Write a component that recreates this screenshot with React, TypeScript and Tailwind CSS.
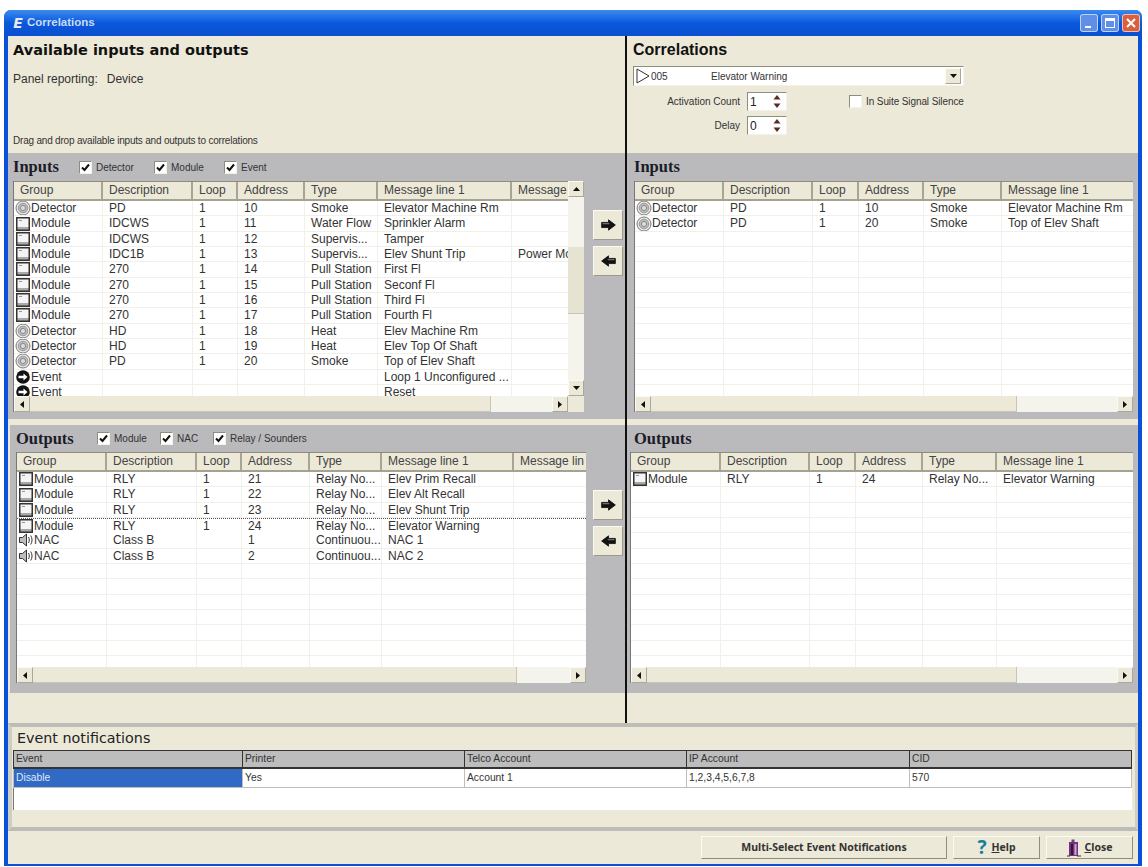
import React from 'react';

type Kind = 'detector' | 'module' | 'event' | 'nac';
type Row = { kind: Kind; group: string; cells: string[]; dotted?: boolean };

const ui = "font-['Liberation_Sans',Arial,sans-serif]";

const KindIcon: React.FC<{ kind: Kind }> = ({ kind }) => {
  if (kind === 'detector') {
    return (
      <svg width="16" height="16" viewBox="0 0 16 16" className="shrink-0">
        <circle cx="8" cy="8" r="7" fill="#ececec" stroke="#777" />
        <circle cx="8" cy="8" r="4.800" fill="#bdbdbd" stroke="#999" />
        <circle cx="8" cy="8" r="2.600" fill="#dcdcdc" stroke="#888" />
      </svg>
    );
  }
  if (kind === 'module') {
    return (
      <svg width="16" height="16" viewBox="0 0 16 16" className="shrink-0">
        <rect x="1" y="1" width="14" height="14" fill="#333" />
        <rect x="2.500" y="2.500" width="11" height="8.500" fill="#f4f4f4" />
        <rect x="2.500" y="11" width="11" height="2.500" fill="#a8a8a8" />
        <path d="M4 4.500h3" stroke="#999" />
      </svg>
    );
  }
  if (kind === 'event') {
    return (
      <svg width="16" height="16" viewBox="0 0 16 16" className="shrink-0">
        <circle cx="8" cy="8" r="6.800" fill="#111" />
        <path d="M3.500 6.800h5V4.600l4 3.400-4 3.400V9.200h-5z" fill="#fff" />
      </svg>
    );
  }
  return (
    <svg width="16" height="16" viewBox="0 0 16 16" className="shrink-0">
      <path d="M1.500 5.500h3l4-3.500v12l-4-3.500h-3z" fill="#bdbdbd" stroke="#333" />
      <path d="M10.500 5c1 1.800 1 4.200 0 6M12.700 3.500c1.800 2.800 1.800 6.200 0 9" fill="none" stroke="#333" />
    </svg>
  );
};

const Check: React.FC<{ on?: boolean }> = ({ on = true }) => (
  <span className="w-[13px] h-[13px] shrink-0 flex items-center justify-center bg-white border border-t-[#8e8e80] border-l-[#8e8e80] border-r-[#f4f3ea] border-b-[#f4f3ea]">
    {on && (
      <svg width="9" height="9" viewBox="0 0 9 9">
        <path d="M1 4.500l2.500 2.500L8 1.500" fill="none" stroke="#111" strokeWidth="2" />
      </svg>
    )}
  </span>
);

const CheckItem: React.FC<{ label: string; width: string }> = ({ label, width }) => (
  <label className={`flex items-center gap-[4px] ${width}`}>
    <Check />
    <span className="text-[10px] text-[#333]">{label}</span>
  </label>
);

const ScrollBtn: React.FC<{ dir: 'up' | 'down' | 'left' | 'right' }> = ({ dir }) => {
  const d = {
    up: 'M1 6l3.500-4 3.500 4z',
    down: 'M1 2l3.500 4 3.500-4z',
    left: 'M6 1l-4 3.500 4 3.500z',
    right: 'M2 1l4 3.500-4 3.500z',
  }[dir];
  return (
    <span className="w-[16px] h-[16px] shrink-0 flex items-center justify-center bg-[#ece9d8] border border-t-[#fbfaf3] border-l-[#fbfaf3] border-r-[#aca899] border-b-[#aca899]">
      <svg width="9" height="9" viewBox="0 0 9 9">
        <path d={d} fill="#111" />
      </svg>
    </span>
  );
};

const HScroll: React.FC<{ thumb: string }> = ({ thumb }) => (
  <div className="h-[16px] shrink-0 flex bg-[#f5f4ec]">
    <ScrollBtn dir="left" />
    <div className={`${thumb} h-[16px] bg-[#ece9d8] border-b border-r border-[#c9c6b4]`} />
    <div className="flex-1" />
    <ScrollBtn dir="right" />
  </div>
);

const Grid: React.FC<{
  widths: number[];
  headers: string[];
  rows: Row[];
  thumb: string;
  rowCount: number;
}> = ({ widths, headers, rows, thumb, rowCount }) => (
  <div className="flex-1 min-w-0 flex flex-col h-[231px]">
    <div className="h-[20px] shrink-0 flex bg-[#ece9d8] border-t border-[#8f8c7c] border-b-2 border-b-[#a5a292]">
      {headers.map((h, i) => (
        <div
          key={h}
          style={{ width: widths[i] }}
          className="shrink-0 pl-[6px] text-[12px] leading-[17px] text-[#444] whitespace-nowrap overflow-hidden border-r-2 border-r-[#a8a595] last:border-r-0"
        >
          {h}
        </div>
      ))}
    </div>
    <div className="flex-1 min-h-0 overflow-hidden bg-white">
      {Array.from({ length: rowCount }).map((_, r) => {
        const row = rows[r];
        return (
          <div
            key={r}
            className={`h-[15.33px] flex ${row?.dotted ? 'border-t border-dotted border-t-[#555]' : 'border-b border-[#f1f1e9]'}`}
          >
            {widths.map((w, c) => (
              <div
                key={c}
                style={{ width: w }}
                className="shrink-0 pl-[6px] first:pl-[1px] flex items-center text-[12px] leading-[14px] text-[#333] whitespace-nowrap overflow-hidden border-r border-[#f1f1e9] last:border-r-0"
              >
                {row && c === 0 && <KindIcon kind={row.kind} />}
                {row && (c === 0 ? row.group : row.cells[c - 1])}
              </div>
            ))}
          </div>
        );
      })}
    </div>
    <HScroll thumb={thumb} />
  </div>
);

const TransferBtn: React.FC<{ dir: 'right' | 'left' }> = ({ dir }) => (
  <button className="w-[30px] h-[30px] flex items-center justify-center bg-[#ece9d8] border border-t-[#fbfaf3] border-l-[#fbfaf3] border-r-[#9d9a8a] border-b-[#9d9a8a]">
    <svg width="17" height="12" viewBox="0 0 18 14">
      <path
        d={dir === 'right' ? 'M1 4h8V1l8 6-8 6v-3H1z' : 'M17 4H9V1L1 7l8 6v-3h8z'}
        fill="#111"
        stroke="#111"
      />
      <path d={dir === 'right' ? 'M2 5.500h8' : 'M16 5.500H8'} stroke="#999" strokeWidth="1" />
    </svg>
  </button>
);

const Spin: React.FC<{ value: string }> = ({ value }) => (
  <div className="w-[40px] h-[19px] flex items-center bg-white border border-t-[#8e8e80] border-l-[#8e8e80] border-r-[#f4f3ea] border-b-[#f4f3ea]">
    <span className="flex-1 pl-[2px] text-[12px] text-[#222]">{value}</span>
    <svg width="10" height="15" viewBox="0 0 10 15" className="mr-[4px]">
      <path d="M5 1l3.500 4.500h-7z" fill="#5b2a20" />
      <path d="M5 14L8.500 9.500h-7z" fill="#5b2a20" />
    </svg>
  </div>
);

const inputsRows: Row[] = [
  { kind: 'detector', group: 'Detector', cells: ['PD', '1', '10', 'Smoke', 'Elevator Machine Rm', ''] },
  { kind: 'module', group: 'Module', cells: ['IDCWS', '1', '11', 'Water Flow', 'Sprinkler Alarm', ''] },
  { kind: 'module', group: 'Module', cells: ['IDCWS', '1', '12', 'Supervis...', 'Tamper', ''] },
  { kind: 'module', group: 'Module', cells: ['IDC1B', '1', '13', 'Supervis...', 'Elev Shunt Trip', 'Power Mc'] },
  { kind: 'module', group: 'Module', cells: ['270', '1', '14', 'Pull Station', 'First Fl', ''] },
  { kind: 'module', group: 'Module', cells: ['270', '1', '15', 'Pull Station', 'Seconf Fl', ''] },
  { kind: 'module', group: 'Module', cells: ['270', '1', '16', 'Pull Station', 'Third Fl', ''] },
  { kind: 'module', group: 'Module', cells: ['270', '1', '17', 'Pull Station', 'Fourth Fl', ''] },
  { kind: 'detector', group: 'Detector', cells: ['HD', '1', '18', 'Heat', 'Elev Machine Rm', ''] },
  { kind: 'detector', group: 'Detector', cells: ['HD', '1', '19', 'Heat', 'Elev Top Of Shaft', ''] },
  { kind: 'detector', group: 'Detector', cells: ['PD', '1', '20', 'Smoke', 'Top of Elev Shaft', ''] },
  { kind: 'event', group: 'Event', cells: ['', '', '', '', 'Loop 1 Unconfigured ...', ''] },
  { kind: 'event', group: 'Event', cells: ['', '', '', '', 'Reset', ''] },
];

const outputsRows: Row[] = [
  { kind: 'module', group: 'Module', cells: ['RLY', '1', '21', 'Relay No...', 'Elev Prim Recall', ''] },
  { kind: 'module', group: 'Module', cells: ['RLY', '1', '22', 'Relay No...', 'Elev Alt Recall', ''] },
  { kind: 'module', group: 'Module', cells: ['RLY', '1', '23', 'Relay No...', 'Elev Shunt Trip', ''] },
  { kind: 'module', group: 'Module', cells: ['RLY', '1', '24', 'Relay No...', 'Elevator Warning', ''], dotted: true },
  { kind: 'nac', group: 'NAC', cells: ['Class B', '', '1', 'Continuou...', 'NAC 1', ''] },
  { kind: 'nac', group: 'NAC', cells: ['Class B', '', '2', 'Continuou...', 'NAC 2', ''] },
];

const baseHeaders = ['Group', 'Description', 'Loop', 'Address', 'Type', 'Message line 1'];
const eventCols = [
  { label: 'Event', value: 'Disable', width: 'w-[229px]' },
  { label: 'Printer', value: 'Yes', width: 'w-[222px]' },
  { label: 'Telco Account', value: 'Account 1', width: 'w-[222px]' },
  { label: 'IP Account', value: '1,2,3,4,5,6,7,8', width: 'w-[223px]' },
  { label: 'CID', value: '570', width: 'flex-1' },
];

const sectionTitle = "font-['Liberation_Serif',serif] font-bold text-[16.5px] leading-[20px] text-[#1c1c28]";
const gray = 'bg-[#bababc]';

export default function App() {
  return (
    <div className={`w-[1148px] h-[867px] bg-white pt-[10px] pl-[4px] overflow-hidden ${ui}`}>
      <div className="w-[1138px] h-[856px] flex flex-col rounded-t-[7px] overflow-hidden bg-[#0a50d8]">
        {/* title bar */}
        <div className="h-[26px] shrink-0 flex items-center pl-[7px] pr-[2px] bg-linear-to-b from-[#3a8af0] via-[#0a58dc] to-[#0a4fd0]">
          <span className="w-[14px] text-center font-['DejaVu_Sans',sans-serif] text-[14px] leading-none font-bold italic text-[#e6e9ee]">
            E
          </span>
          <span className="ml-[2px] text-[11.500px] font-bold text-[#c8dcf6]">Correlations</span>
          <div className="ml-auto flex gap-[3px]">
            <span className="w-[18px] h-[18px] rounded-[3px] border border-white/60 bg-[#5f8fe6] flex items-end pl-[4px] pb-[3px]">
              <span className="w-[6px] h-[2px] bg-white" />
            </span>
            <span className="w-[18px] h-[18px] rounded-[3px] border border-white/60 bg-[#5f8fe6] flex items-center justify-center">
              <span className="w-[10px] h-[10px] border border-t-[3px] border-white" />
            </span>
            <span className="w-[18px] h-[18px] rounded-[3px] border border-white/60 bg-[#d8603e] flex items-center justify-center">
              <svg width="12" height="12" viewBox="0 0 12 12">
                <path d="M2 2l8 8M10 2l-8 8" stroke="#fff" strokeWidth="2" />
              </svg>
            </span>
          </div>
        </div>

        <div className="flex-1 min-h-0 mx-[4px] mb-[2px] flex flex-col bg-[#ece9d8]">
          <div className="h-[687px] shrink-0 flex">
            {/* left pane */}
            <div className="w-[617px] shrink-0 flex flex-col">
              <div className="h-[117px] shrink-0 flex flex-col pl-[5px] pt-[4px]">
                <h1 className="font-['DejaVu_Sans',sans-serif] font-bold text-[14.500px] leading-[20px] text-[#111]">
                  Available inputs and outputs
                </h1>
                <p className="mt-[11px] text-[12px] leading-[16px] text-[#333]">
                  Panel reporting:<span className="ml-[9px]">Device</span>
                </p>
                <p className="mt-auto mb-[5px] text-[10px] tracking-[-0.2px] leading-[14px] text-[#333]">
                  Drag and drop available inputs and outputs to correlations
                </p>
              </div>

              <div className={`h-[266px] shrink-0 ${gray} pl-[5px] flex flex-col`}>
                <div className="h-[28px] shrink-0 flex items-center">
                  <h2 className={`${sectionTitle} w-[66px]`}>Inputs</h2>
                  <CheckItem label="Detector" width="w-[75px]" />
                  <CheckItem label="Module" width="w-[70px]" />
                  <CheckItem label="Event" width="w-[60px]" />
                </div>
                <div className="flex">
                  <div className="w-[571px] h-[231px] flex border-l border-[#777]">
                    <Grid
                      widths={[89, 90, 45, 67, 73, 134, 56]}
                      headers={[...baseHeaders, 'Message']}
                      rows={inputsRows}
                      thumb="w-[461px]"
                      rowCount={13}
                    />
                    <div className="w-[16px] h-[231px] shrink-0 flex flex-col bg-[#f5f4ec]">
                      <ScrollBtn dir="up" />
                      <div className="h-[50px] shrink-0" />
                      <div className="h-[67px] shrink-0 bg-[#e6e3d2] border-b border-[#c9c6b4]" />
                      <div className="flex-1" />
                      <ScrollBtn dir="down" />
                      <div className="h-[16px] shrink-0 bg-[#ece9d8]" />
                    </div>
                  </div>
                  <div className="ml-[9px] pt-[29px] flex flex-col gap-[6px]">
                    <TransferBtn dir="right" />
                    <TransferBtn dir="left" />
                  </div>
                </div>
              </div>

              <div className="h-[6px] shrink-0" />

              <div className={`h-[268px] shrink-0 ml-[2px] ${gray} pl-[6px] flex flex-col`}>
                <div className="h-[27px] shrink-0 flex items-center">
                  <h2 className={`${sectionTitle} w-[81px]`}>Outputs</h2>
                  <CheckItem label="Module" width="w-[63px]" />
                  <CheckItem label="NAC" width="w-[53px]" />
                  <CheckItem label="Relay / Sounders" width="w-[100px]" />
                </div>
                <div className="flex">
                  <div className="w-[570px] h-[231px] flex border-l border-[#777]">
                    <Grid
                      widths={[90, 90, 45, 68, 72, 132, 72]}
                      headers={[...baseHeaders, 'Message lin']}
                      rows={outputsRows}
                      thumb="w-[484px]"
                      rowCount={13}
                    />
                  </div>
                  <div className="ml-[7px] pt-[38px] flex flex-col gap-[6px]">
                    <TransferBtn dir="right" />
                    <TransferBtn dir="left" />
                  </div>
                </div>
              </div>
            </div>

            <div className="w-[2px] shrink-0 bg-[#111]" />

            {/* right pane */}
            <div className="flex-1 min-w-0 flex flex-col">
              <div className="h-[117px] shrink-0 pl-[6px] pt-[4px] flex flex-col">
                <h1 className="font-bold text-[16px] leading-[20px] text-[#111]">Correlations</h1>
                <div className="mt-[6px] w-[331px] h-[20px] flex items-center bg-white border border-t-[#8e8e80] border-l-[#8e8e80] border-r-[#f4f3ea] border-b-[#f4f3ea]">
                  <svg width="15" height="16" viewBox="0 0 15 16" className="shrink-0 ml-[2px]">
                    <path d="M1 1l12 7-12 7z" fill="#fff" stroke="#333" />
                  </svg>
                  <span className="text-[10px] text-[#333] w-[60px] shrink-0">005</span>
                  <span className="text-[10px] text-[#333] flex-1">Elevator Warning</span>
                  <span className="mr-[2px]">
                    <ScrollBtn dir="down" />
                  </span>
                </div>
                <div className="mt-[6px] flex items-center">
                  <span className="w-[107px] text-right text-[10px] text-[#333]">Activation Count</span>
                  <span className="ml-[7px]">
                    <Spin value="1" />
                  </span>
                  <span className="ml-[62px]">
                    <Check on={false} />
                  </span>
                  <span className="ml-[4px] text-[10px] tracking-[-0.1px] text-[#333]">In Suite Signal Silence</span>
                </div>
                <div className="mt-[5px] flex items-center">
                  <span className="w-[107px] text-right text-[10px] text-[#333]">Delay</span>
                  <span className="ml-[7px]">
                    <Spin value="0" />
                  </span>
                </div>
              </div>

              <div className={`h-[266px] shrink-0 ${gray} pl-[7px] pr-[5px] flex flex-col`}>
                <div className="h-[28px] shrink-0 flex items-center">
                  <h2 className={sectionTitle}>Inputs</h2>
                </div>
                <div className="h-[231px] flex border-l border-[#777]">
                  <Grid
                    widths={[89, 89, 46, 65, 78, 132]}
                    headers={baseHeaders}
                    rows={inputsRows.filter((r) => r.cells[2] === '10' || r.cells[2] === '20')}
                    thumb="w-[366px]"
                    rowCount={13}
                  />
                </div>
              </div>

              <div className="h-[6px] shrink-0" />

              <div className={`h-[268px] shrink-0 ${gray} pl-[3px] pr-[5px] flex flex-col`}>
                <div className="h-[27px] shrink-0 flex items-center pl-[4px]">
                  <h2 className={sectionTitle}>Outputs</h2>
                </div>
                <div className="h-[231px] flex border-l border-[#777]">
                  <Grid
                    widths={[90, 89, 46, 67, 74, 136]}
                    headers={baseHeaders}
                    rows={outputsRows.filter((r) => r.dotted).map((r) => ({ ...r, dotted: false }))}
                    thumb="w-[370px]"
                    rowCount={13}
                  />
                </div>
              </div>
            </div>
          </div>

          {/* event notifications */}
          <div className="h-[108px] shrink-0 flex flex-col border-y-4 border-y-[#bdbcb6] border-l-4 border-l-[#cfcec2] border-r-3 border-r-[#cfcec2] pl-[1px] pr-[3px]">
            <h3 className="h-[23px] shrink-0 pl-[4px] font-['DejaVu_Sans',sans-serif] text-[14.300px] leading-[22px] text-[#222]">
              Event notifications
            </h3>
            <div className="h-[19px] shrink-0 flex bg-[#bdbdbd] border border-[#333] border-b-2">
              {eventCols.map((c) => (
                <div key={c.label} className={`${c.width} pl-[2px] text-[10.300px] leading-[16px] text-[#333] border-r border-[#333] last:border-r-0`}>
                  {c.label}
                </div>
              ))}
            </div>
            <div className="h-[19px] shrink-0 flex bg-white border-x border-b border-[#bdbdbd]">
              {eventCols.map((c, i) => (
                <div
                  key={c.label}
                  className={`${c.width} pl-[2px] text-[10.300px] leading-[17px] border-r border-[#bdbdbd] last:border-r-0 ${i === 0 ? 'bg-[#316ac5] text-[#dfe8f7]' : 'text-[#333]'}`}
                >
                  {c.value}
                </div>
              ))}
            </div>
            <div className="h-[22px] shrink-0 bg-white border-l border-[#777]" />
          </div>

          {/* footer */}
          <div className="flex-1 flex items-center justify-end gap-[6px] pr-[5px] font-['Noto_Sans',sans-serif] text-[10.500px] font-bold text-[#333]">
            <button className="w-[246px] h-[23px] bg-[#ece9d8] border border-t-[#fbfaf3] border-l-[#fbfaf3] border-r-[#8f8c7c] border-b-[#8f8c7c]">
              Multi-Select Event Notifications
            </button>
            <button className="w-[87px] h-[23px] flex items-center justify-center gap-[5px] bg-[#ece9d8] border border-t-[#fbfaf3] border-l-[#fbfaf3] border-r-[#8f8c7c] border-b-[#8f8c7c]">
              <span className="text-[19px] leading-none text-[#16809a]">?</span>
              <span>
                <span className="underline">H</span>elp
              </span>
            </button>
            <button className="w-[87px] h-[23px] flex items-center justify-center gap-[3px] bg-[#ece9d8] border border-t-[#fbfaf3] border-l-[#fbfaf3] border-r-[#8f8c7c] border-b-[#8f8c7c]">
              <svg width="15" height="18" viewBox="0 0 15 18">
                <rect x="2" y="3" width="9" height="14" fill="#7a2a8a" />
                <rect x="4" y="5" width="2" height="11" fill="#222" />
                <rect x="7.500" y="5" width="2" height="11" fill="#c9a9d0" />
                <rect x="4.500" y="0.500" width="3" height="2.500" fill="#555" />
                <path d="M0 17h3M10 17h4" stroke="#333" />
              </svg>
              <span>
                <span className="underline">C</span>lose
              </span>
            </button>
          </div>
        </div>
      </div>
    </div>
  );
}
